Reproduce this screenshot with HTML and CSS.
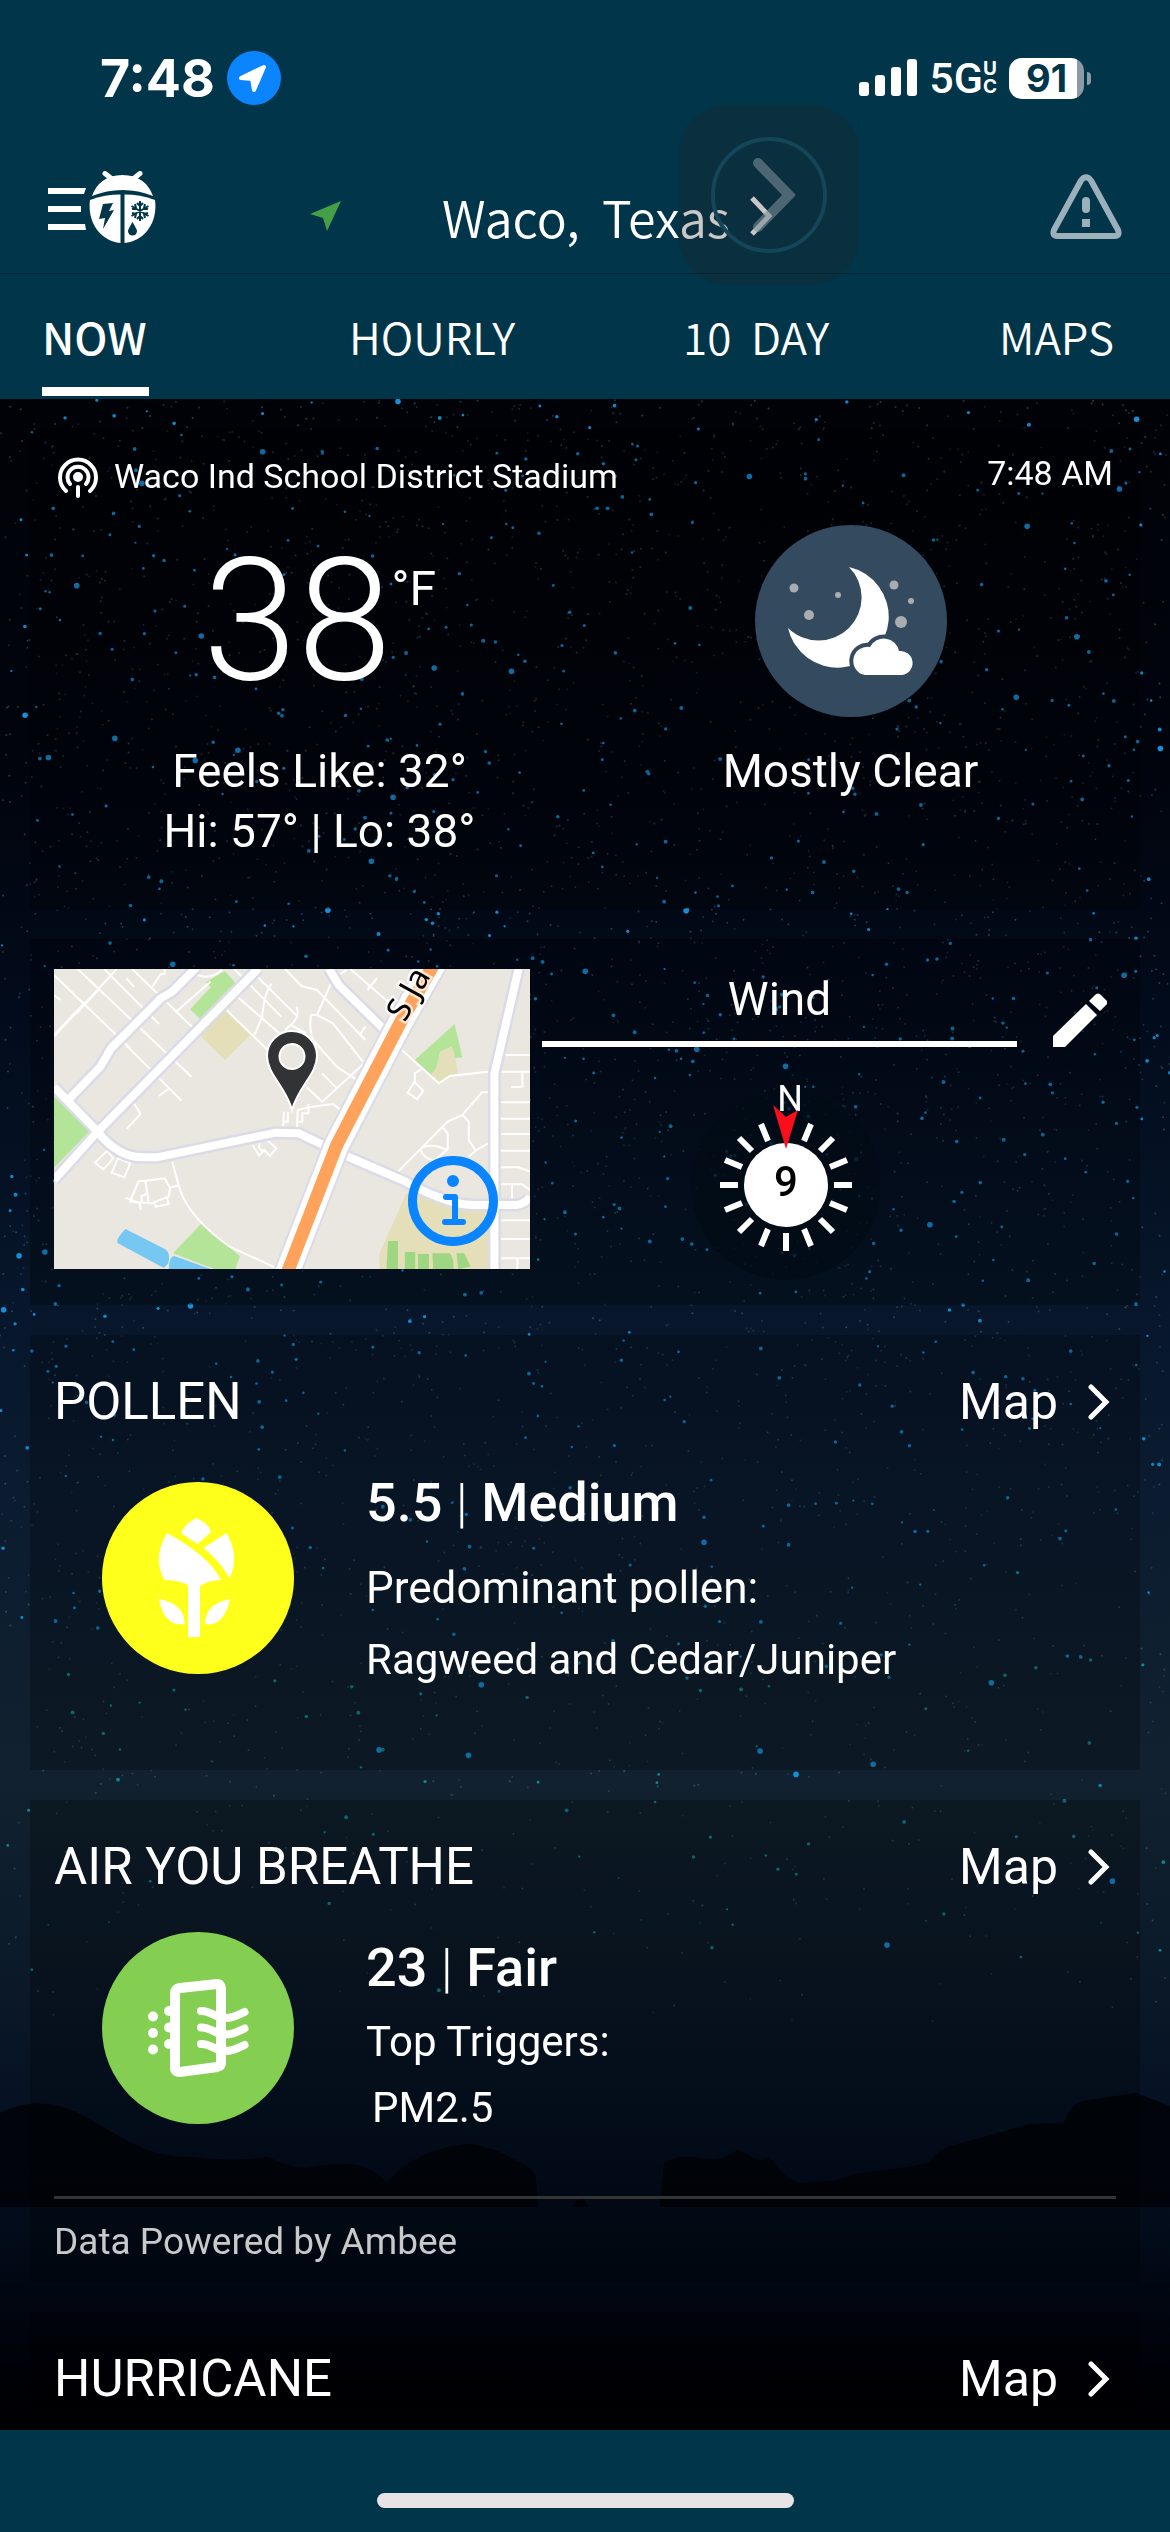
FILE: index.html
```
<!DOCTYPE html>
<html lang="en">

<head>
	<meta charset="UTF-8">
	<meta name="viewport" content="width=device-width, initial-scale=1">
	<title>Waco, Texas - Weather</title>
	<link rel="stylesheet" href="styles.css">
</head>

<body>
	<header class="top">
		<div class="status-bar">
			<span class="clock">7:48</span>
			<svg class="location-badge" viewBox="0 0 54 54" aria-hidden="true">
				<circle cx="27" cy="27" r="27" fill="#0a84ff"/>
				<path d="M14 27 37 16 27 39 25 28Z" fill="#fff" stroke="#fff" stroke-width="4" stroke-linejoin="round"/>
			</svg>
			<svg class="signal" viewBox="0 0 58 38" fill="#fff" aria-hidden="true">
				<rect x="0" y="23" width="10" height="14" rx="3"/>
				<rect x="16" y="16" width="10" height="21" rx="3"/>
				<rect x="32" y="8" width="10" height="29" rx="3"/>
				<rect x="48" y="0" width="10" height="37" rx="3"/>
			</svg>
			<span class="network">5G</span>
			<span class="network-sub"><span>U</span><span>C</span></span>
			<span class="battery">91</span>
			<span class="battery-cap"></span>
		</div>

		<div class="nav">
			<button class="menu" type="button" aria-label="Menu">
				<svg width="108" height="72" viewBox="0 0 108 72">
					<path d="M0 17h38l-2 6H0zM0 35h33v6H0zM0 53h37l1 6H0z" fill="#fff"/>
					<g fill="#fff">
						<path d="M44 25C48 13 58 4 74.500 4S101 13 105 25C86 17 63 17 44 25Z"/>
						<path d="M57 2.500 64 8M92 2.500 85 8" stroke="#fff" stroke-width="5" stroke-linecap="round"/>
						<path d="M72.500 24V72C52 70 39 51 42 29 52 25 62 23.500 72.500 23.500Z"/>
						<path d="M76.500 24V72C97 70 110 51 107 29 97 25 87 23.500 76.500 23.500Z"/>
					</g>
					<path d="M55 33 65 32 61 40 66 39 55 58 57 47 51 48Z" fill="#00354a"/>
					<path d="M92 30v20M83.500 35l17 10M83.500 45l17-10M89 32l3 3 3-3M89 48l3-3 3 3M84 38l4-1-1-4M100 38l-4-1 1-4M84 42l4 1-1 4M100 42l-4 1 1 4" fill="none" stroke="#00354a" stroke-width="2"/>
					<path d="M84.500 51C88 57 89 59 89 60a4.500 4.500 0 0 1-9 0C80 59 81 57 84.500 51Z" fill="#00354a"/>
				</svg>
			</button>
			<svg class="gps" viewBox="0 0 31 30" aria-hidden="true"><path d="M31 0 0 13 13 17 17 30Z" fill="#43a047"/></svg>
			<a class="place" href="#">
				<span>Waco,&nbsp; Texas</span>
				<svg width="22" height="40" viewBox="0 0 22 40"><path d="M2 2 19 20 2 38" fill="none" stroke="#fff" stroke-width="5"/></svg>
			</a>
			<button class="alerts" type="button" aria-label="Alerts">
				<svg width="72" height="66" viewBox="0 0 72 66">
					<path d="M31 6.500Q36 0 41 6.500L68 56Q70 62 65 62H7Q2 62 4 56Z" fill="none" stroke="#9cb0ba" stroke-width="6" stroke-linejoin="round"/>
					<path d="M36 27v8" stroke="#9cb0ba" stroke-width="8" stroke-linecap="round"/>
					<path d="M32 45h8v8h-8z" fill="#9cb0ba"/>
				</svg>
			</button>
		</div>

		<nav class="tabs">
			<a class="tab active" href="#">NOW</a>
			<a class="tab" href="#">HOURLY</a>
			<a class="tab" href="#">10&nbsp; DAY</a>
			<a class="tab" href="#">MAPS</a>
		</nav>

		<!-- floating assistive button -->
		<button class="floating" type="button" aria-label="Next">
			<svg width="180" height="180" viewBox="0 0 180 180" fill="none">
				<circle cx="90" cy="90" r="56" stroke="#144558" stroke-width="4"/>
				<path d="M79 58 110 90 79 122" stroke="#7a8c98" stroke-opacity=".6" stroke-width="10" stroke-linecap="round"/>
			</svg>
		</button>
	</header>

	<main class="scene">
		<canvas class="stars" id="stars"></canvas>
		<svg class="hills" viewBox="0 2080 1170 130" preserveAspectRatio="none" aria-hidden="true">
			<path d="M0 2113Q42 2092 88 2118 120 2138 145 2149 170 2158 191 2157 230 2162 268 2157 290 2168 306 2168 350 2160 363 2167 378 2172 386 2183 402 2166 421 2156 450 2144 471 2144 495 2148 513 2159 534 2168 536 2178L538 2207H0Z"/>
			<path d="M660 2207 664 2164Q675 2154 700 2158 720 2163 738 2150L761 2161 769 2156Q785 2180 800 2183 820 2182 838 2180 856 2172 876 2171 910 2168 930 2162 940 2148 950 2146L995 2134 1029 2124 1064 2123Q1070 2104 1083 2101L1136 2093 1170 2106V2207Z"/>
			<path d="M572 2207Q582 2190 588 2207Z"/>
		</svg>

		<section class="card current">
			<div class="station">
				<svg width="40" height="42" viewBox="0 0 40 42" fill="none" stroke="#fff" stroke-width="4" stroke-linecap="round" aria-hidden="true">
					<path d="M8 34A18 18 0 1 1 32 34M12 27A10.500 10.500 0 1 1 28 27M20 30v9"/>
					<circle cx="20" cy="20" r="3" fill="#fff"/>
				</svg>
				<span class="station-name">Waco Ind School District Stadium</span>
				<span class="station-time">7:48 AM</span>
			</div>
			<div class="conditions">
				<div class="temperature">
					<div class="degrees"><span class="value">38</span><span class="unit">°F</span></div>
					<p>Feels Like: 32°</p>
					<p>Hi: 57° | Lo: 38°</p>
				</div>
				<div class="sky">
					<svg class="disc" viewBox="0 0 192 192" aria-hidden="true">
						<circle cx="96" cy="96" r="96" fill="#344a5e"/>
						<path d="M94 42A51 51 0 1 1 33 103 43 43 0 0 0 94 42Z" fill="#fff"/>
						<path d="M110 150A14 14 0 1 1 115 122 15.500 15.500 0 0 1 144 126 12 12 0 0 1 147 150Z" fill="#fff" stroke="#344a5e" stroke-width="8" paint-order="stroke"/>
						<g fill="#aaadb0">
							<circle cx="39" cy="63" r="4.500"/><circle cx="83" cy="70" r="3"/><circle cx="54" cy="90" r="5"/>
							<circle cx="139" cy="60" r="4.500"/><circle cx="156" cy="76" r="3"/><circle cx="146" cy="97" r="6"/>
						</g>
					</svg>
					<p>Mostly Clear</p>
				</div>
			</div>
		</section>

		<section class="card wind-card">
			<a class="mini-map" href="#" aria-label="Open map">
				<svg viewBox="0 0 476 300">
					<svg width="476" height="300" viewBox="141 207 1244 900" preserveAspectRatio="none" fill="none" class="streets">
						<path d="M141 207h1244v900H141z" fill="#eae7e0"/>
						<g fill="#b3e498">
							<path d="M587 213 615 248 523 357 497 328 551 262 538 247ZM141 590 235 692 141 803ZM525 972 627 1068 615 1107H560L452 1060ZM1188 372 1208 472 1190 475 1180 440 1150 455 1142 500 1127 525 1084 480Z"/>
						</g>
						<g fill="#e4dfb9">
							<path d="M588 330 654 405 588 480 521 405ZM1180 440 1150 455 1142 500 1127 525 1147 547 1197 520 1190 475ZM1062 880 1280 935V1107H992L990 1065Z"/>
						</g>
						<g fill="#9fd681">
							<path d="M1014 1023h26v84h-30zM1058 1056h27v51h-27zM1092 1062h29v45h-29zM1130 1060h45q12 14 10 47h-53zM1193 1060h20l17 40-33 7z"/>
						</g>
						<path d="M328 987 432 1048Q446 1060 440 1090L428 1104 308 1030Q300 1020 328 987ZM455 1068 550 1107H441Q442 1070 455 1068Z" fill="#76c8f2"/>
						<g class="lane">
							<path d="M203 207 500 530M141 225 340 445M272 207 415 372M345 207 475 350M305 207 141 410M350 260 330 235M220 310 141 405M258 268 200 340M141 285 158 300M430 207V222H420L397 262M516 225Q550 240 580 210M550 245 460 335 520 400M325 430 474 602M440 567 415 588M350 610 367 642 332 686M587 325 740 495M615 285 760 430M612 207 735 350M668 225 778 350M745 207 788 258 828 270 955 420M865 250 828 345 870 370 948 485M710 250Q690 280 685 350L665 405M775 320Q785 350 760 375L745 390M760 375 800 400M828 345H812Q808 400 818 420L880 500 935 542M980 460 842 605 800 560M842 520 880 565M955 380 940 405M915 207 1060 350M905 210 890 222M985 235 960 270M1050 450 1147 550 1175 528 1275 515H1385M1100 508 1084 520V545L1065 578 1090 598 1106 572 1084 547M740 680 742 635M776 684 778 630 806 622 870 612 888 628M806 612V640H790V665H780M752 635V665H742"/>
							<path d="M1275 577H1260L1208 645 1170 665 1040 815M1208 645 1225 665V720L1243 752 1275 730M1243 752 1225 770M1157 683 1170 700V748L1135 780Q1110 780 1098 748 1120 725 1170 750M1320 465H1385M1365 515V560L1335 562M1308 607H1385M1308 656H1385M1308 702H1385M1308 752H1385M1308 802H1355L1385 815M1308 853H1365L1385 870M1338 853V900M1308 961H1385M1308 1017H1385M1308 1075H1385M1352 1075V1107"/>
							<path d="M280 752 248 788 270 808 296 775 280 752M308 775 292 818 325 832 340 790ZM385 843H362L340 905 395 910 440 890 445 865 430 835 380 842M445 862 465 857M380 843 388 905M370 905V888L385 880M402 905 407 920 441 912 435 890M328 893 365 910 368 930M660 735 677 767 690 750 705 768 722 745 700 722M680 730Q670 745 690 755M450 785 468 860Q490 950 600 1040L720 1103"/>
						</g>
						<g class="casing">
							<path d="M515 200 450 275 420 295 290 445 262 500 178 600M675 205 255 695 141 840M141 560 255 695Q310 775 380 772H410L720 698 780 700 845 735M905 768 1060 845Q1170 915 1240 915H1350Q1375 910 1385 890M860 207 885 255 1005 390M1355 207 1292 520V1107"/>
						</g>
						<g class="road">
							<path d="M515 200 450 275 420 295 290 445 262 500 178 600M675 205 255 695 141 840M141 560 255 695Q310 775 380 772H410L720 698 780 700 845 735M905 768 1060 845Q1170 915 1240 915H1350Q1375 910 1385 890M860 207 885 255 1005 390M1355 207 1292 520V1107"/>
						</g>
						<path d="M750 1120 880 735 1045 370 1135 190" class="highway-casing"/>
						<path d="M750 1120 880 735 1045 370 1135 190" class="highway-edge"/>
						<path d="M750 1120 880 735 1045 370 1135 190" class="highway"/>
					</svg>
					<text class="street-name" transform="translate(351 54) rotate(-61)">S Ja</text>
					<path d="M238 141C232 118 213 105 213 87A25 25 0 0 1 263 87C263 105 244 118 238 141ZM238 75A12.500 12.500 0 1 0 238 100 12.500 12.500 0 1 0 238 75Z" fill="#313335" fill-rule="evenodd" stroke="#fff" stroke-width="2"/>
					<g fill="none" stroke="#0a84ff" stroke-linecap="round" stroke-linejoin="round">
						<circle cx="399" cy="232" r="40.500" stroke-width="9"/>
						<path d="M392 228h9v25M391 253h18" stroke-width="6"/>
						<circle cx="399" cy="212" r="3" stroke-width="6"/>
					</g>
				</svg>
			</a>
			<div class="wind">
				<h2>Wind</h2>
				<svg class="compass" viewBox="-106 -105 200 200">
					<circle r="95" class="compass-back"/>
					<g class="ticks">
						<path d="M0 48V66M48 0H66M-48 0H-66M18 44 25 61M-18 44-25 61M18-44 25-61M-18-44-25-61M34 34 47 47M-34 34-47 47M34-34 47-47M-34-34-47-47M44 18 61 25M-44 18-61 25M44-18 61-25M-44-18-61-25"/>
					</g>
					<circle r="42" fill="#fff"/>
					<text x="4" y="-74" class="north">N</text>
					<path d="M-13-80 0-68 12-75 0-36Z" fill="#fc0d1b"/>
					<text x="0" y="11" class="speed">9</text>
				</svg>
			</div>
			<button class="edit" type="button" aria-label="Edit">
				<svg width="54" height="54" viewBox="0 0 54 54" fill="#fff">
					<path d="M0 43 33 11 44 22 12 54H0ZM36 8 42 2Q45-1 48 2L53 7Q56 10 53 12L47 18Z"/>
				</svg>
			</button>
		</section>

		<section class="card pollen">
			<div class="card-head">
				<h2>POLLEN</h2>
				<a class="map-link" href="#">Map
					<svg width="22" height="36" viewBox="0 0 22 36"><path d="M3 3 18 18 3 33"/></svg>
				</a>
			</div>
			<div class="index">
				<svg class="disc" viewBox="0 0 192 192" aria-hidden="true">
					<circle cx="96" cy="96" r="96" fill="#ffff1c"/>
					<g fill="#fff">
						<path d="M94 36Q107 42 109 50L95.500 62 79 51Q83 42 94 36Z"/>
						<path d="M65 51Q107 74 119 98 107 98 98 104V155H86V103Q76 98 62.500 98 50 76 65 51Z"/>
						<path d="M124.500 51Q138 74 127.500 96 117 78 101.500 66Z"/>
						<path d="M57 117Q83 122 82.500 142 62 145 57 117ZM128 117Q103 122 103 142 122 145 128 117Z"/>
					</g>
				</svg>
				<div class="reading">
					<p class="level">5.5 <span class="bar">|</span> Medium</p>
					<p class="lead">Predominant pollen:</p>
					<p>Ragweed and Cedar/Juniper</p>
				</div>
			</div>
		</section>

		<section class="card air">
			<div class="card-head">
				<h2>AIR YOU BREATHE</h2>
				<a class="map-link" href="#">Map
					<svg width="22" height="36" viewBox="0 0 22 36"><path d="M3 3 18 18 3 33"/></svg>
				</a>
			</div>
			<div class="index">
				<svg class="disc" viewBox="0 0 192 192" aria-hidden="true">
					<circle cx="96" cy="96" r="96" fill="#84cf51"/>
					<g fill="#fff">
						<circle cx="51" cy="84.500" r="5"/><circle cx="51" cy="101" r="5"/><circle cx="51" cy="117.500" r="5"/>
						<circle cx="67" cy="79" r="5"/><circle cx="67" cy="95.500" r="5"/><circle cx="67" cy="112" r="5"/>
					</g>
					<g fill="none" stroke="#fff" stroke-linecap="round">
						<path d="M78 56 115 52Q119 52 119 57V131Q119 134 115 135L78 140Q73 140 73 136V61Q73 57 78 56Z" stroke-width="10"/>
						<path d="M99 79C107 78 114 86 122 86S134 84 142.500 80M99 95.500C107 94.500 114 102.500 122 102.500S134 100.500 142.500 96.500M99 112C107 111 114 119 122 119S134 117 142.500 113" stroke-width="8"/>
					</g>
				</svg>
				<div class="reading">
					<p class="level">23 <span class="bar">|</span> Fair</p>
					<p>Top Triggers:</p>
					<p class="trigger">PM2.5</p>
				</div>
			</div>
			<p class="credit">Data Powered by Ambee</p>
		</section>

		<section class="card">
			<div class="card-head">
				<h2>HURRICANE</h2>
				<a class="map-link" href="#">Map
					<svg width="22" height="36" viewBox="0 0 22 36"><path d="M3 3 18 18 3 33"/></svg>
				</a>
			</div>
		</section>
	</main>

	<footer class="bottom"><span class="home-bar"></span></footer>
	<script src="stars.js"></script>
</body>

</html>
```
FILE: stars.js
```
// night sky: same seed every load so the stars don't jump around
var canvas = document.getElementById("stars");
var seed = 748;

function random() {
	seed = (seed * 1664525 + 1013904223) % 4294967296;
	return seed / 4294967296;
}

function drawStars() {
	var w = canvas.width = canvas.clientWidth;
	var h = canvas.height = canvas.clientHeight;
	var ctx = canvas.getContext("2d");
	var count = Math.round(w * h / 300);
	seed = 748;

	for (var i = 0; i < count; i++) {
		var x = random() * w;
		var y = random() * h;
		var size = random();
		var depth = y / h;
		// stars thin out towards the horizon
		if (depth > 0.8 || random() < (depth - 0.4) * 2.2) continue;

		if (size > 0.99) {
			ctx.fillStyle = "#1590d8";
			ctx.globalAlpha = 1;
		} else if (size > 0.84) {
			ctx.fillStyle = depth > 0.62 ? "#148a96" : "#1090d4";
			ctx.globalAlpha = 0.95;
		} else {
			ctx.fillStyle = "#46788c";
			ctx.globalAlpha = 0.25 + random() * 0.3;
		}
		ctx.beginPath();
		ctx.arc(x, y, size > 0.99 ? 2.8 : size > 0.84 ? 1.1 + random() * 0.9 : 1, 0, Math.PI * 2);
		ctx.fill();
	}
}

drawStars();
window.addEventListener("resize", drawStars);
```
FILE: styles.css
```
* {
	box-sizing: border-box;
}

body {
	margin: 0;
	min-height: 100vh;
	display: flex;
	flex-direction: column;
	background: #00354a;
	color: #fff;
	font-family: Roboto, sans-serif;
	font-size: 44px;
}

h2,
p {
	margin: 0;
	font-weight: 400;
}

a {
	color: inherit;
	text-decoration: none;
}

button {
	padding: 0;
	border: 0;
	background: none;
	cursor: pointer;
}

svg {
	display: block;
	flex-shrink: 0;
}

/* header */
.top {
	position: relative;
	font-family: "Noto Sans CJK JP", "Noto Sans", sans-serif;
}

.status-bar {
	display: flex;
	align-items: center;
	height: 156px;
	padding: 0 79px 0 100px;
	font-family: Inter, sans-serif;
	font-weight: 700;
}

.clock {
	font-size: 52px;
}

.location-badge {
	width: 54px;
	height: 54px;
	margin-left: 12px;
}

.signal {
	width: 58px;
	height: 38px;
	margin-left: auto;
}

.network {
	margin-left: 12px;
	font-family: Roboto, sans-serif;
	font-size: 43px;
	font-weight: 500;
}

.network-sub {
	display: flex;
	flex-direction: column;
	font-size: 19px;
	line-height: 18px;
}

.battery {
	width: 75px;
	height: 41px;
	margin-left: 12px;
	border-radius: 13px;
	background: linear-gradient(to right, #fff 68px, #8b9aa5 68px);
	color: #00354a;
	font-size: 38px;
	line-height: 41px;
	text-align: center;
}

.battery-cap {
	width: 4px;
	height: 13px;
	margin-left: 3px;
	border-radius: 0 4px 4px 0;
	background: #8b9aa5;
}

.nav {
	display: flex;
	align-items: center;
	height: 118px;
	padding: 0 48px 16px;
	border-bottom: 1px solid #02253a;
}

.gps {
	width: 31px;
	height: 30px;
	margin: 18px 0 0 154px;
}

.place {
	display: flex;
	align-items: center;
	gap: 20px;
	margin: 18px 0 0 101px;
	font-size: 50px;
	font-weight: 350;
	line-height: 72px;
}

.alerts {
	margin-left: auto;
}

.tabs {
	display: grid;
	grid-template-columns: 307fr 334fr 316fr 129fr;
	justify-items: start;
	padding: 0 42px;
	font-size: 44px;
	font-weight: 350;
}

.tab {
	height: 125px;
	line-height: 124px;
}

.tab.active {
	height: 122px;
	padding-right: 2px;
	border-bottom: 9px solid #fff;
	font-weight: 500;
}

.floating {
	position: absolute;
	top: 105px;
	left: 58%;
	border-radius: 48px;
	background: rgba(40, 33, 33, 0.25);
}

/* sky behind the cards */
.scene {
	position: relative;
	flex: 1;
	display: flex;
	flex-direction: column;
	gap: 30px;
	padding: 30px 30px 0;
	background: linear-gradient(#000207 0%, #01040d 18%, #020b1b 30%, #07162a 44%, #0b1c30 54%, #11212f 68%, #0c1b2a 76%, #030e20 87%, #020c1a 90%, #000108 97%, #000 100%);
	overflow: hidden;
	z-index: 0;
}

.stars {
	position: absolute;
	top: 0;
	left: 0;
	width: 100%;
	height: 100%;
	z-index: -2;
}

.hills {
	position: absolute;
	left: 0;
	bottom: 220px;
	width: 100%;
	height: 130px;
	z-index: -1;
	fill: #010207;
	fill-opacity: 0.85;
}

.card {
	padding: 36px 24px 0;
	background: rgba(0, 0, 0, 0.25);
}

.disc {
	width: 192px;
	height: 192px;
}

.current {
	padding: 28px 24px 48px;
}

.station {
	display: flex;
	align-items: flex-start;
	height: 40px;
	padding: 0 3px 0 4px;
	font-size: 34px;
}

.station-name {
	margin-left: 16px;
	line-height: 38px;
}

.station-time {
	margin-left: auto;
	line-height: 32px;
}

.conditions {
	display: grid;
	grid-template-columns: 1fr 1fr;
	margin-top: 28px;
	font-size: 46px;
	line-height: 60px;
	text-align: center;
}

.degrees {
	display: flex;
	justify-content: center;
	margin-bottom: 24px;
}

.value {
	font-size: 170px;
	font-weight: 300;
	line-height: 192px;
}

.unit {
	margin-top: 36px;
	font-size: 48px;
	line-height: 56px;
}

.sky .disc {
	margin: 0 auto 24px;
}

/* map and wind */
.wind-card {
	display: grid;
	grid-template-columns: 476fr 12px 475fr 99px;
	align-items: start;
	padding: 30px 24px 25px;
}

.mini-map svg {
	width: 100%;
}

.lane {
	stroke: #fff;
	stroke-width: 2;
}

.streets path {
	vector-effect: non-scaling-stroke;
}

.casing {
	stroke: #dadbe6;
	stroke-width: 13;
}

.road {
	stroke: #fff;
	stroke-width: 8;
}

.highway-casing {
	stroke: #dadbe6;
	stroke-width: 28;
}

.highway-edge {
	stroke: #fff;
	stroke-width: 24;
}

.highway {
	stroke: #ffa35c;
	stroke-width: 13;
}

.street-name {
	font-family: "Noto Sans", sans-serif;
	font-size: 33px;
	fill: #000;
	stroke: #fff;
	stroke-opacity: 0.7;
	stroke-width: 5;
	paint-order: stroke;
}

.wind {
	grid-column: 3;
}

.wind h2 {
	padding-bottom: 12px;
	border-bottom: 6px solid #fff;
	font-size: 46px;
	line-height: 60px;
	text-align: center;
}

.compass {
	width: 200px;
	height: 200px;
	margin: 33px auto 0;
}

.compass-back {
	fill: #020b16;
	fill-opacity: 0.7;
}

.ticks {
	stroke: #fff;
	stroke-width: 6;
}

.north {
	font-size: 36px;
	fill: #fff;
	text-anchor: middle;
}

.speed {
	font-size: 42px;
	font-weight: 500;
	fill: #000;
	text-anchor: middle;
}

.edit {
	justify-self: end;
	margin: 24px 9px 0 0;
}

/* pollen, air, hurricane */
.card-head {
	display: flex;
	justify-content: space-between;
	font-size: 50px;
	line-height: 62px;
}

.card-head h2 {
	font-size: 51px;
}

.map-link {
	display: flex;
	align-items: center;
	gap: 30px;
	padding-right: 6px;
}

.map-link path {
	fill: none;
	stroke: #fff;
	stroke-width: 5;
	stroke-linecap: round;
}

.index {
	display: flex;
	gap: 72px;
	padding: 34px 0 0 48px;
	font-size: 42px;
	line-height: 66px;
}

.level {
	margin-bottom: 5px;
	font-size: 54px;
	font-weight: 500;
	line-height: 72px;
}

.bar {
	font-weight: 300;
}

.pollen {
	padding-bottom: 74px;
}

.pollen .disc {
	margin-top: 15px;
}

.pollen .index {
	line-height: 72px;
}

.pollen .level {
	margin-bottom: 13px;
}

.lead {
	font-size: 44px;
}

.trigger {
	padding-left: 6px;
}

.credit {
	margin-top: 55px;
	padding: 16px 0 14px;
	border-top: 3px solid #333438;
	color: #c8c9cb;
	font-size: 37px;
	line-height: 53px;
}

/* home indicator */
.bottom {
	display: flex;
	justify-content: center;
	height: 102px;
	padding-top: 63px;
}

.home-bar {
	width: 417px;
	height: 15px;
	border-radius: 8px;
	background: #e8e4e6;
}
```
